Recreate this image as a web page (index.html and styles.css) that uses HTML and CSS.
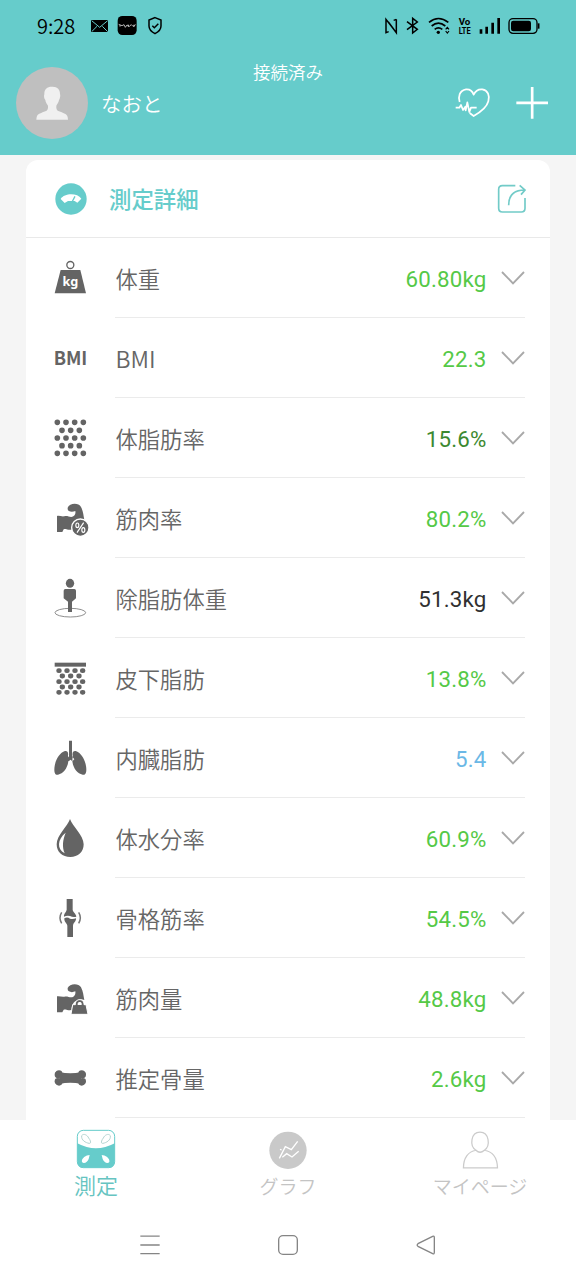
FILE: index.html
```html
<!DOCTYPE html>
<html lang="ja">
<head>
<meta charset="utf-8">
<meta name="viewport" content="width=device-width">
<title>測定詳細</title>
<link rel="stylesheet" href="styles.css">
</head>
<body>
<svg class="defs" width="0" height="0">
  <symbol id="chevron" viewBox="0 0 72 42"><path d="M3 3L36 37L69 3" fill="none" stroke="#a9a9a9" stroke-width="5.5"/></symbol>
  <symbol id="arm" viewBox="30 24 120 120"><path d="M83 53C88 39 116 37 123 51C130 64 130 76 133 89C118 83 102 91 97 105C94 112 95 119 95 119C84 121 76 115 71 118L67 126H51V78C58 76 66 81 73 79C83 76 91 84 100 79C106 75 107 69 106 63C96 68 83 65 83 57Z"/></symbol>
</svg>
<header class="top">
  <div class="status">
    <span class="time">9:28</span>
    <div class="notices">
      <svg width="20" height="26" viewBox="270 42 60 78"><rect x="273" y="60" width="51" height="36"/><path d="M275 62L299 82L323 62M275 95L291 79M323 95L307 79" fill="none" stroke="#66cccb" stroke-width="3"/></svg>
      <svg width="21" height="26" viewBox="351 42 63 78"><rect x="353" y="48" width="57" height="57" rx="14"/><path d="M356 73L366 77L372 74L376 82L381 75L388 79L394 74L399 79L407 74M360 80V75M385 81V74M402 81V74" fill="none" stroke="#ddd" stroke-width="2.4"/></svg>
      <svg class="shield" width="16" height="26" viewBox="441 42 48 78"><path d="M465 53L483 60V78C483 90 475 96 465 101C455 96 447 90 447 78V60ZM457 77L463 83L475 71" fill="none" stroke="#000" stroke-width="4.5"/></svg>
    </div>
    <div class="system">
      <svg width="14" height="26" viewBox="284 42 42 78"><path d="M298 95L290 98V58L315 90M321 58V98L297 66M321 58L313 61" fill="none" stroke="#000" stroke-width="4.5"/></svg>
      <svg width="16" height="26" viewBox="347 42 48 78"><path d="M353 65L384 88L370 99V55L384 66L353 89" fill="none" stroke="#000" stroke-width="4.5"/></svg>
      <svg width="23" height="26" viewBox="417 42 69 78"><g fill="none" stroke="#000" stroke-width="5"><path d="M420 67Q448 44 478 67M428 78Q448 61 469 78M437 88Q448 79 460 88"/><path d="M470 88L475 82L480 88M470 93L475 99L480 93" stroke-width="3.5"/></g><circle cx="448" cy="97" r="5"/></svg>
      <svg width="14" height="26" viewBox="506 42 42 78"><g class="volte"><text x="508" y="75" textLength="35" lengthAdjust="spacingAndGlyphs">Vo</text><text x="508" y="101" textLength="36" lengthAdjust="spacingAndGlyphs">LTE</text></g></svg>
      <svg width="22" height="26" viewBox="570 42 66 78"><path d="M576 88V101M593 80V101M611 68V101M629 54V101" stroke="#000" stroke-width="8"/></svg>
      <svg width="32" height="26" viewBox="660 42 96 78"><rect x="663" y="56" width="84" height="44" rx="12" fill="none" stroke="#000" stroke-width="4"/><rect x="669" y="62" width="60" height="32" rx="7"/><path d="M752 70V86" stroke="#000" stroke-width="5"/></svg>
    </div>
  </div>
  <div class="profile">
    <div class="user">
      <svg width="72" height="72" viewBox="48 202 216 216"><circle cx="156" cy="310" r="108" fill="#bfbfbf"/><path d="M156 261C171 260 181 269 180 284C182 286 180 298 177 301C176 309 171 313 169 318C168 328 171 333 177 335C188 340 200 342 203 352L204 360H109L110 352C113 342 125 340 136 335C142 333 145 328 144 318C141 313 137 309 136 301C132 298 131 287 133 284C132 269 141 261 156 261Z" fill="#f0f0f0"/></svg>
      <span>なおと</span>
    </div>
    <p class="link-state">接続済み</p>
    <div class="actions">
      <svg width="36" height="32" viewBox="501 262 108 96"><path d="M515 307C510 292 514 272 534 269C546 268 554 276 557 285C563 272 573 268 583 269C600 272 606 288 601 305C596 325 575 339 557 349L545 340M503 324H514L519 316L525 331L532 321L533 332L538 308L544 337L549 324H566" fill="none" stroke="#fff" stroke-width="5.2" stroke-linejoin="round"/></svg>
      <svg width="32" height="32" viewBox="682 262 96 96"><path d="M683 309.500H778M730.500 262V357" stroke="#fff" stroke-width="8"/></svg>
    </div>
  </div>
</header>
<main class="content">
  <section class="card">
    <div class="card-head">
      <svg width="32" height="32" viewBox="104 98 96 96"><circle cx="152" cy="146" r="47" fill="#66cccb"/><path d="M121 146C132 128 171 127 183 145L171 157L163 152H143L133 158Z" fill="#fff"/><path d="M155 155L164 138" stroke="#66cccb" stroke-width="4"/></svg>
      <h1>測定詳細</h1>
      <svg width="30" height="30" viewBox="352 101 90 90"><path d="M407 106H368Q357 106 357 117V174Q357 185 368 185H425Q436 185 436 174V143M387 165C387 138 401 119 435 119M420 105L436 119L424 133" fill="none" stroke="#72cbc8" stroke-width="5"/></svg>
    </div>
    <ul class="metrics">
      <li><svg class="icon" viewBox="90 324 120 120"><circle cx="151" cy="345" r="10.500" fill="none" stroke="#646464" stroke-width="4"/><path d="M122 360H181L198 430H104Z"/><text class="kg" x="151" y="409" text-anchor="middle">kg</text></svg>
        <div class="line"><span>体重</span><b>60.80kg</b><svg class="chev"><use href="#chevron"/></svg></div></li>
      <li><svg class="icon" viewBox="30 24 120 120"><text class="bmi" x="41" y="104" textLength="101" lengthAdjust="spacingAndGlyphs">BMI</text></svg>
        <div class="line"><span class="latin">BMI</span><b>22.3</b><svg class="chev"><use href="#chevron"/></svg></div></li>
      <li><svg class="icon" viewBox="30 264 120 120"><path class="dots" d="M52 277h0M78 277h0M104 277h0M130 277h0M66 301h0M92 301h0M118 301h0M52 324h0M78 324h0M104 324h0M130 324h0M66 347h0M92 347h0M118 347h0M52 370h0M78 370h0M104 370h0M130 370h0"/></svg>
        <div class="line"><span>体脂肪率</span><b class="high">15.6%</b><svg class="chev"><use href="#chevron"/></svg></div></li>
      <li><svg class="icon" viewBox="30 24 120 120"><use href="#arm" x="30" y="24" width="120" height="120"/><circle cx="121" cy="113" r="26" stroke="#fff" stroke-width="4"/><path d="M131 98L111 128" stroke="#fff" stroke-width="3.5"/><g fill="none" stroke="#fff" stroke-width="3.5"><ellipse cx="112" cy="106" rx="4.500" ry="7"/><ellipse cx="130" cy="120" rx="4.500" ry="7"/></g></svg>
        <div class="line"><span>筋肉率</span><b>80.2%</b><svg class="chev"><use href="#chevron"/></svg></div></li>
      <li><svg class="icon" viewBox="30 264 120 120"><ellipse cx="91" cy="368" rx="46" ry="13" fill="none" stroke="#777" stroke-width="2.500"/><ellipse cx="90" cy="280" rx="12.500" ry="13.500"/><path d="M76 297H103Q108 297 108 302V325L96 335V366H84V335L71 325V302Q71 297 76 297Z"/></svg>
        <div class="line"><span>除脂肪体重</span><b class="plain">51.3kg</b><svg class="chev"><use href="#chevron"/></svg></div></li>
      <li><svg class="icon" viewBox="30 24 120 120"><path d="M44 38H138V50H44Z"/><path class="dots flat" d="M56 62h2M80 62h2M104 62h2M127 62h2M66 78h2M91 78h2M116 78h2M56 95h2M80 95h2M104 95h2M127 95h2M66 111h2M91 111h2M116 111h2M56 127h2M80 127h2M104 127h2M127 127h2"/></svg>
        <div class="line"><span>皮下脂肪</span><b>13.8%</b><svg class="chev"><use href="#chevron"/></svg></div></li>
      <li><svg class="icon" viewBox="30 264 120 120"><path d="M87 272H96V319L103 328L97 334L91.500 329L86 334L80 328L87 319ZM73 304C81 301 86 307 84 317L85 333C83 354 70 371 54 374C42 376 42 360 44 348C47 329 59 309 73 304ZM109 304C101 301 96 307 98 317L97 333C99 354 112 371 128 374C140 376 140 360 138 348C135 329 123 309 109 304Z"/></svg>
        <div class="line"><span>内臓脂肪</span><b class="low">5.4</b><svg class="chev"><use href="#chevron"/></svg></div></li>
      <li><svg class="icon" viewBox="30 24 120 120"><path d="M90 27C97 48 131 76 131 103C131 127 114 141 91 141C67 141 50 127 50 103C50 76 83 48 90 27Z"/><path d="M77 68C52 88 50 117 74 130C66 110 68 90 77 68Z" fill="#fff"/></svg>
        <div class="line"><span>体水分率</span><b>60.9%</b><svg class="chev"><use href="#chevron"/></svg></div></li>
      <li><svg class="icon" viewBox="30 264 120 120"><path d="M80 267H98V299C99 307 108 310 109 320Q99 323 90 318Q80 316 72 320C71 311 79 306 80 299ZM73 325Q82 320 90 326Q99 328 108 325C109 335 100 337 99 347V381H82V347C80 338 72 336 73 325Z"/><path d="M65 307Q55 323 65 340M116 307Q126 323 116 340" fill="none" stroke="#777" stroke-width="4.500"/></svg>
        <div class="line"><span>骨格筋率</span><b>54.5%</b><svg class="chev"><use href="#chevron"/></svg></div></li>
      <li><svg class="icon" viewBox="30 24 120 120"><use href="#arm" x="30" y="25" width="120" height="120"/><path d="M98 104H106C104 84 134 84 132 104H138L144 133H93Z" stroke="#fff" stroke-width="3"/><path d="M113 105V101C113 94 125 94 125 101V105Z" fill="#fff"/></svg>
        <div class="line"><span>筋肉量</span><b>48.8kg</b><svg class="chev"><use href="#chevron"/></svg></div></li>
      <li><svg class="icon" viewBox="30 264 120 120"><path d="M58 306Q91 314 124 306V342Q91 334 58 342Z"/><circle cx="57" cy="311" r="10"/><circle cx="125" cy="311" r="10"/><circle cx="57" cy="337" r="10"/><circle cx="125" cy="337" r="10"/><circle cx="54" cy="314" r="10"/><circle cx="128" cy="314" r="10"/><circle cx="54" cy="334" r="10"/><circle cx="128" cy="334" r="10"/></svg>
        <div class="line"><span>推定骨量</span><b>2.6kg</b><svg class="chev"><use href="#chevron"/></svg></div></li>
    </ul>
  </section>
</main>
<footer class="bottom">
  <nav class="tabs">
    <a class="tab active"><svg width="40" height="40" viewBox="229 57 120 120"><rect x="233" y="61" width="112" height="112" rx="18" fill="#fff" stroke="#66cccb" stroke-width="3"/><path d="M233 100Q289 130 345 100V155Q345 173 327 173H251Q233 173 233 155Z" fill="#66cccb"/><g fill="none" stroke="#b5d5d2" stroke-width="3"><path d="M246 77C252 69 263 75 267 84C274 93 275 101 268 100C258 98 244 91 246 77Z"/><path d="M332 77C326 69 315 75 311 84C304 93 303 101 310 100C320 98 334 91 332 77Z"/></g><path d="M270 135C260 135 244 145 247 156C253 164 264 155 267 147ZM306 135C316 135 332 145 329 156C323 164 312 155 309 147Z" fill="#fff"/></svg><span>測定</span></a>
    <a class="tab"><svg width="40" height="40" viewBox="-60 -67 120 120"><circle cy="-3" r="56" fill="#c9c9c9"/><path d="M-26 21L-8 -14L10 -5L29 -30M-17 18L-4 7L12 17L32 0M-24 -6L-19 -4" fill="none" stroke="#fff" stroke-width="4"/></svg><span>グラフ</span></a>
    <a class="tab"><svg width="40" height="40" viewBox="516 60 120 128"><path d="M563 128C542 115 546 70 576 70C606 70 610 115 590 128C580 137 571 136 563 128C538 132 523 153 523 184H632C631 153 616 132 590 128" fill="none" stroke="#cbcbcb" stroke-width="4"/></svg><span>マイページ</span></a>
  </nav>
  <div class="sysnav">
    <svg width="20" height="20" viewBox="0 0 60 60"><path d="M1 3.500H59M1 30H59M1 56H59" stroke="#858585" stroke-width="4"/></svg>
    <svg width="20" height="20" viewBox="0 0 60 60"><rect x="2" y="2" width="56" height="56" rx="13" fill="none" stroke="#858585" stroke-width="4"/></svg>
    <svg width="20" height="20" viewBox="0 0 60 60"><path d="M50 4L6 26Q1 30 6 34L50 56Q55 58 55 52V8Q55 2 50 4Z" fill="none" stroke="#858585" stroke-width="4"/></svg>
  </div>
</footer>
</body>
</html>
```
FILE: styles.css
```css
* { box-sizing: border-box; }
body {
  margin: 0;
  width: 576px;
  height: 1280px;
  display: flex;
  flex-direction: column;
  overflow: hidden;
  background: #f5f5f5;
  font-family: "Noto Sans CJK JP", sans-serif;
  font-weight: 350;
}
svg { display: block; flex: none; }
.defs { display: none; }
.top { height: 155px; flex: none; background: #66cccb; color: #fff; padding-top: 13px; }
.status { height: 26px; display: flex; align-items: center; padding: 0 36px 0 37px; color: #000; }
.time { width: 53px; font-size: 20px; line-height: 26px; }
.status svg { margin-top: 1px; }
.notices { display: flex; gap: 7px; }
.notices .shield { margin-left: 2px; }
.system { display: flex; margin-left: auto; gap: 7px; }
.volte { font: bold 27px Roboto, sans-serif; }
.profile { display: grid; grid-template-columns: 1fr auto 1fr; padding: 0 28px 0 16px; margin-top: 23px; }
.user { display: flex; align-items: center; gap: 13px; margin-top: 5px; font-size: 20.5px; }
.link-state { margin: 0; font-size: 17.5px; line-height: 20px; transform: translateX(6px); }
.actions { display: flex; justify-content: flex-end; align-items: center; gap: 25px; margin-top: 5px; }
.content { flex: 1; min-height: 0; overflow: hidden; padding: 5px 26px 0; }
.card { background: #fff; border-radius: 12px 12px 0 0; height: 960px; }
.card-head { height: 78px; display: flex; align-items: center; padding: 0 23px 0 29px; border-bottom: 1px solid #e9e9e9; }
.card-head h1 { flex: 1; margin: 0 0 2px 22px; font-size: 22.4px; font-weight: 500; line-height: 32px; color: #66cccb; }
.metrics { list-style: none; margin: 0; padding: 0 25px 0 24px; }
.metrics li { height: 80px; display: flex; align-items: center; }
.icon { width: 40px; height: 40px; fill: #646464; }
.line { flex: 1; height: 80px; display: flex; align-items: center; margin-left: 25px; border-bottom: 1px solid #ebebeb; font-size: 22.3px; color: #666; }
.line span { flex: 1; line-height: 32px; padding-left: .5px; }
.line .latin { font-size: 23px; }
.line b { font-family: Roboto, sans-serif; font-weight: 400; line-height: 26px; letter-spacing: .2px; padding-top: 3px; color: #55c947; }
.line .high { color: #3c8930; }
.line .plain { color: #303030; }
.line .low { color: #6bb8e6; }
.chev { width: 24px; height: 14px; margin-left: 14.5px; }
.kg { font: bold 38px "Noto Sans", sans-serif; fill: #fff; }
.bmi { font: bold 57px "Noto Sans CJK JP", sans-serif; }
.dots { fill: none; stroke: #646464; stroke-width: 17; stroke-linecap: round; }
.flat { stroke-width: 14.5; }
.bottom { height: 160px; flex: none; background: #fff; }
.tabs { display: grid; grid-template-columns: repeat(3, 1fr); height: 115px; padding-top: 9px; }
.tab { display: flex; flex-direction: column; align-items: center; color: #c4c4c4; font-size: 19px; line-height: 34px; }
.active { color: #66c4c1; font-size: 22px; line-height: 31px; }
.sysnav { display: flex; justify-content: center; gap: 118px; }
```
